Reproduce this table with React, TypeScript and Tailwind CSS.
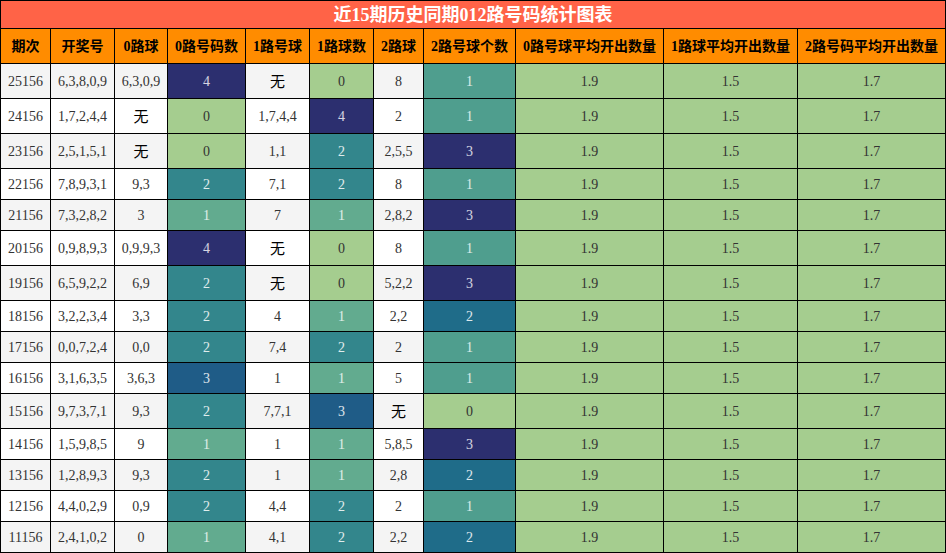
import React from "react";

type Row = {
  qi: string;
  kj: string;
  r0: string;
  n0: number;
  r1: string;
  n1: number;
  r2: string;
  n2: number;
};

const rows: Row[] = [
  { qi: "25156", kj: "6,3,8,0,9", r0: "6,3,0,9", n0: 4, r1: "无", n1: 0, r2: "8", n2: 1 },
  { qi: "24156", kj: "1,7,2,4,4", r0: "无", n0: 0, r1: "1,7,4,4", n1: 4, r2: "2", n2: 1 },
  { qi: "23156", kj: "2,5,1,5,1", r0: "无", n0: 0, r1: "1,1", n1: 2, r2: "2,5,5", n2: 3 },
  { qi: "22156", kj: "7,8,9,3,1", r0: "9,3", n0: 2, r1: "7,1", n1: 2, r2: "8", n2: 1 },
  { qi: "21156", kj: "7,3,2,8,2", r0: "3", n0: 1, r1: "7", n1: 1, r2: "2,8,2", n2: 3 },
  { qi: "20156", kj: "0,9,8,9,3", r0: "0,9,9,3", n0: 4, r1: "无", n1: 0, r2: "8", n2: 1 },
  { qi: "19156", kj: "6,5,9,2,2", r0: "6,9", n0: 2, r1: "无", n1: 0, r2: "5,2,2", n2: 3 },
  { qi: "18156", kj: "3,2,2,3,4", r0: "3,3", n0: 2, r1: "4", n1: 1, r2: "2,2", n2: 2 },
  { qi: "17156", kj: "0,0,7,2,4", r0: "0,0", n0: 2, r1: "7,4", n1: 2, r2: "2", n2: 1 },
  { qi: "16156", kj: "3,1,6,3,5", r0: "3,6,3", n0: 3, r1: "1", n1: 1, r2: "5", n2: 1 },
  { qi: "15156", kj: "9,7,3,7,1", r0: "9,3", n0: 2, r1: "7,7,1", n1: 3, r2: "无", n2: 0 },
  { qi: "14156", kj: "1,5,9,8,5", r0: "9", n0: 1, r1: "1", n1: 1, r2: "5,8,5", n2: 3 },
  { qi: "13156", kj: "1,2,8,9,3", r0: "9,3", n0: 2, r1: "1", n1: 1, r2: "2,8", n2: 2 },
  { qi: "12156", kj: "4,4,0,2,9", r0: "0,9", n0: 2, r1: "4,4", n1: 2, r2: "2", n2: 1 },
  { qi: "11156", kj: "2,4,1,0,2", r0: "0", n0: 1, r1: "4,1", n1: 2, r2: "2,2", n2: 2 },
];

const headers = [
  "期次",
  "开奖号",
  "0路球",
  "0路号码数",
  "1路号球",
  "1路球数",
  "2路球",
  "2路号球个数",
  "0路号球平均开出数量",
  "1路球平均开出数量",
  "2路号码平均开出数量",
];

const widths = ["w-[50px]", "w-[64px]", "w-[53px]", "w-[78px]", "w-[64px]", "w-[64px]", "w-[50px]", "w-[92px]", "w-[148px]", "w-[134px]", "w-[148px]"];

// scale for columns whose max is 4
const scale4: Record<number, string> = {
  0: "bg-[#a5cd8f] text-[#333]",
  1: "bg-[#62ab8f] text-white/80",
  2: "bg-[#33868c] text-white/85",
  3: "bg-[#1f5c87] text-white/85",
  4: "bg-[#2c2f6f] text-white/80",
};

// scale for the 2路 column (max 3)
const scale3: Record<number, string> = {
  0: "bg-[#a5cd8f] text-[#333]",
  1: "bg-[#4f9e8e] text-white/80",
  2: "bg-[#1f6c89] text-white/85",
  3: "bg-[#2c2f6f] text-white/80",
};

function Plain({ v, bg }: { v: string; bg: string }) {
  const wu = v === "无";
  return (
    <td className={`border border-black text-center ${bg} ${wu ? "text-[15px] text-black font-['Noto_Sans_CJK_SC',sans-serif]" : "text-[#333]"}`}>
      {v}
    </td>
  );
}

export default function App() {
  return (
    <div className="w-[946px] h-[553px] bg-white font-['Liberation_Serif','Noto_Sans_CJK_SC',serif] text-[14px]">
      <div className="h-[28px] bg-[#ff6347] border border-black border-b-0 flex items-center justify-center text-white font-bold text-[18px] leading-none">
        近15期历史同期012路号码统计图表
      </div>
      <table className="w-[946px] table-fixed border-collapse">
        <colgroup>
          {widths.map((w, i) => (
            <col key={i} className={w} />
          ))}
        </colgroup>
        <thead>
          <tr className="h-[35px] bg-[#ff8c00]">
            {headers.map((h) => (
              <th key={h} className="border border-black text-center font-bold text-black text-[14px] whitespace-nowrap p-0">
                {h}
              </th>
            ))}
          </tr>
        </thead>
        <tbody>
          {rows.map((r, i) => {
            const bg = i % 2 === 0 ? "bg-[#f4f4f4]" : "bg-white";
            const tall = [r.r0, r.r1, r.r2].includes("无");
            return (
              <tr key={r.qi} className={tall ? "h-[35px]" : "h-[31px]"}>
                <Plain v={r.qi} bg={bg} />
                <Plain v={r.kj} bg={bg} />
                <Plain v={r.r0} bg={bg} />
                <td className={`border border-black text-center ${scale4[r.n0]}`}>{r.n0}</td>
                <Plain v={r.r1} bg={bg} />
                <td className={`border border-black text-center ${scale4[r.n1]}`}>{r.n1}</td>
                <Plain v={r.r2} bg={bg} />
                <td className={`border border-black text-center ${scale3[r.n2]}`}>{r.n2}</td>
                <td className="border border-black text-center bg-[#a5cd8f] text-[#333]">1.9</td>
                <td className="border border-black text-center bg-[#a5cd8f] text-[#333]">1.5</td>
                <td className="border border-black text-center bg-[#a5cd8f] text-[#333]">1.7</td>
              </tr>
            );
          })}
        </tbody>
      </table>
    </div>
  );
}
